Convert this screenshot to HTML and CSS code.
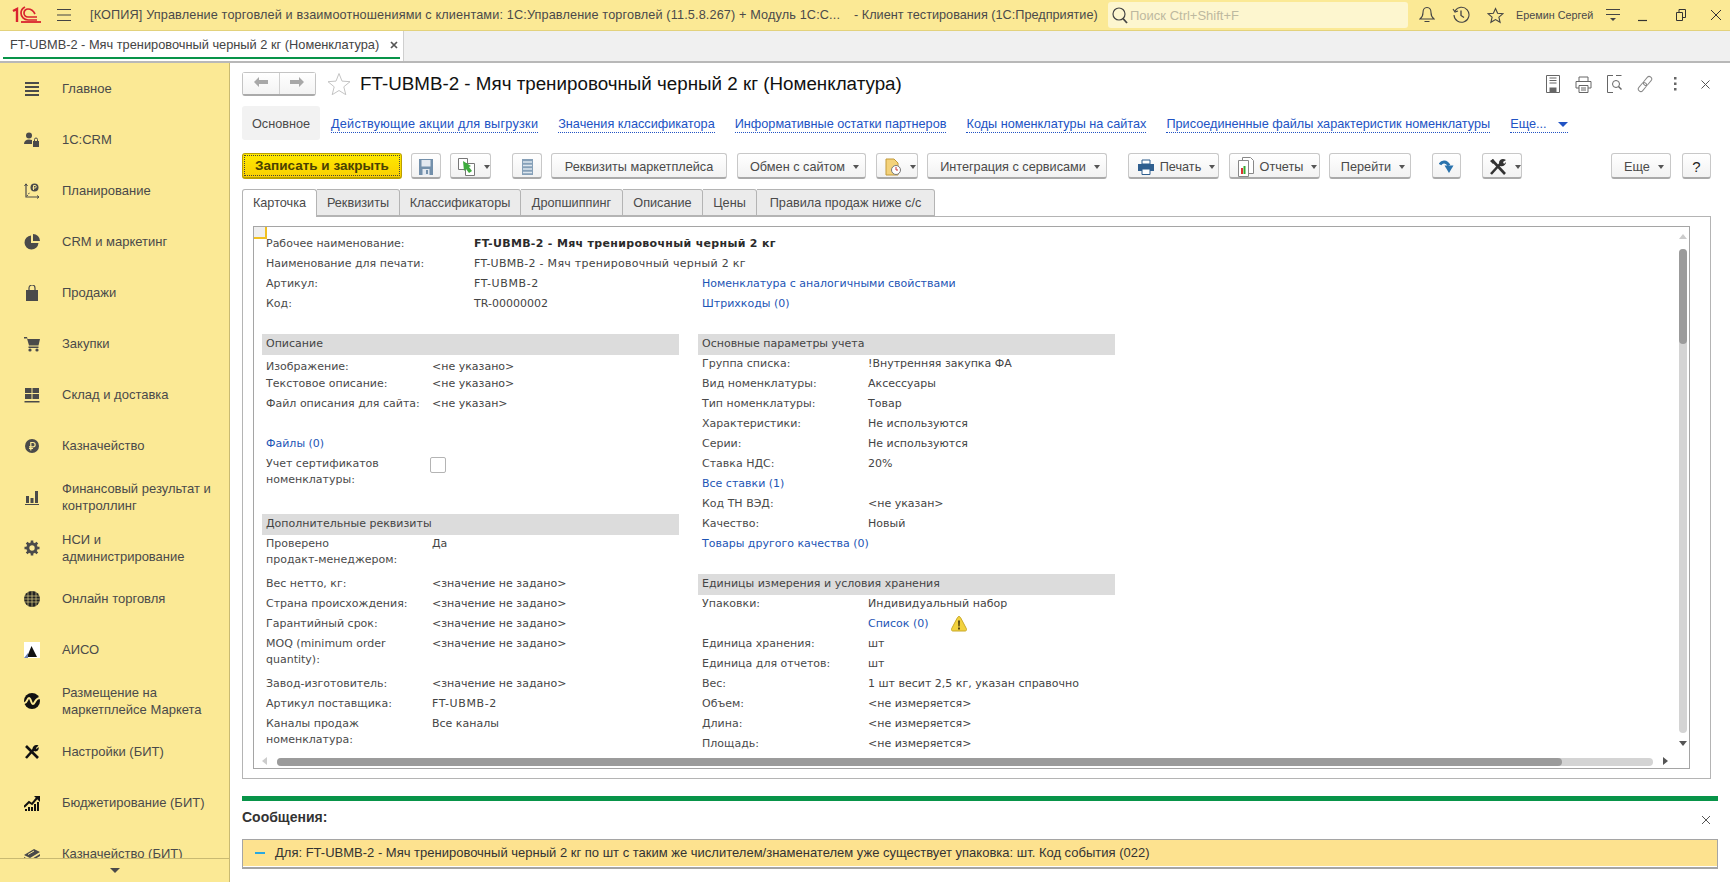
FILE: index.html
```html
<!DOCTYPE html>
<html lang="ru">
<head>
  <meta charset="UTF-8" />
  <title>FT-UBMB-2 - Мяч тренировочный черный 2 кг (Номенклатура)</title>
  <link rel="stylesheet" href="styles.css">
</head>
<body>
<div class="app">

  <!-- window title -->
  <header class="titlebar">
    <svg class="logo" width="30" height="18" viewBox="0 0 30 18"><path d="M1 5l4-2v13M5 3v13" fill="none" stroke="#d9232e" stroke-width="2.4"/><path d="M25 11h-9a4 4 0 0 1 0-8c3 0 5 1 7 5M25 14h-9a7 7 0 0 1-7-7c0-3 2-5 4-6" fill="none" stroke="#d9232e" stroke-width="1.7"/><path d="M9 16h20" stroke="#d9232e" stroke-width="1.8"/></svg>
    <svg class="burger" width="16" height="14" viewBox="0 0 16 14"><path d="M1 1.500h14M1 7h14M1 12.500h14" stroke="#444" stroke-width="1.200"/></svg>
    <span class="app-title">[КОПИЯ] Управление торговлей и взаимоотношениями с клиентами: 1С:Управление торговлей (11.5.8.267) + Модуль 1С:С...</span>
    <span class="app-sub">- Клиент тестирования (1С:Предприятие)</span>
    <div class="search">
      <svg width="18" height="18" viewBox="0 0 18 18"><circle cx="8" cy="8" r="6" fill="none" stroke="#444" stroke-width="1.200"/><path d="M12 12.500l4 4.500" stroke="#444" stroke-width="1.800"/></svg>
      <span>Поиск Ctrl+Shift+F</span>
    </div>
    <svg class="tb-icon bell" width="16" height="18" viewBox="0 0 16 18"><path d="M8 1.500c-3 0-4 2.500-4 5 0 3-1 5-3 6.500h14c-2-1.500-3-3.500-3-6.500 0-2.500-1-5-4-5zM5.500 15.500h5" fill="none" stroke="#444" stroke-width="1.100"/></svg>
    <svg class="tb-icon hist" width="18" height="18" viewBox="0 0 18 18"><path d="M3 5a7.500 7.500 0 1 1-1 4M1 3l2 3 3-1" fill="none" stroke="#444" stroke-width="1.100"/><path d="M9 4.500v5l3 2" fill="none" stroke="#444" stroke-width="1.300"/></svg>
    <svg class="tb-icon fav" width="17" height="17" viewBox="0 0 17 17"><path d="M8.500 1.500l2.100 4.800 5.200.5-3.900 3.400 1.200 5.100-4.600-2.700-4.600 2.700 1.200-5.100L1.200 6.800l5.200-.5z" fill="none" stroke="#444" stroke-width="1.100"/></svg>
    <span class="user">Еремин Сергей</span>
    <svg class="tb-icon umenu" width="16" height="14" viewBox="0 0 16 14"><path d="M1 1.500h14M1 6.500h14" stroke="#444" stroke-width="1.200"/><path d="M5 10h6l-3 3z" fill="#444"/></svg>
    <svg class="tb-icon wmin" width="10" height="14" viewBox="0 0 10 14"><path d="M0 12.500h9" stroke="#333" stroke-width="1.200"/></svg>
    <svg class="tb-icon wres" width="10" height="12" viewBox="0 0 10 12"><path d="M.5 3.500h6v8h-6zM3 3.500V.5h6.500v8H6.500" fill="none" stroke="#333"/></svg>
    <svg class="tb-icon wclose" width="12" height="12" viewBox="0 0 12 12"><path d="M1 1l10 10M11 1L1 11" stroke="#333"/></svg>
  </header>

  <!-- open windows -->
  <div class="opentabs">
    <div class="opentab">
      <span>FT-UBMB-2 - Мяч тренировочный черный 2 кг (Номенклатура)</span>
      <svg width="8" height="8" viewBox="0 0 8 8"><path d="M1 1l6 6M7 1L1 7" stroke="#555" stroke-width="1.700"/></svg>
    </div>
  </div>

  <div class="workspace">

    <aside class="sidebar">
      <nav class="sections">
        <a class="section">
          <svg width="16" height="16" viewBox="0 0 16 16"><path d="M1 2h14M1 6h14M1 10h14M1 14h14" stroke="#4a4a4a" stroke-width="2"/></svg>
          <span>Главное</span>
        </a>
        <a class="section">
          <svg width="16" height="16" viewBox="0 0 16 16"><circle cx="5" cy="3.500" r="3" fill="#4a4a4a"/><path d="M0 12c0-3 2-4.500 5-4.500 1 0 2 .2 3 .6V12z" fill="#4a4a4a"/><path d="M9 9h6v6H9z" fill="#4a4a4a"/><path d="M10.500 9V7.500a1.500 1.500 0 0 1 3 0V9" fill="none" stroke="#4a4a4a"/></svg>
          <span>1С:CRM</span>
        </a>
        <a class="section">
          <svg width="16" height="16" viewBox="0 0 16 16"><path d="M2 1v13h13" fill="none" stroke="#4a4a4a" stroke-width="1.200"/><path d="M.5 3L2 .8 3.500 3M13 12.500l2 1.500-2 1.500" fill="none" stroke="#4a4a4a"/><circle cx="10.500" cy="4.500" r="4" fill="#4a4a4a"/><path d="M9.500 7V2.500h1.500a1 1 0 0 1 0 2.500H8.500" fill="none" stroke="#fbe995"/><path d="M3 13l3-4" stroke="#4a4a4a" stroke-dasharray="1.500 1"/></svg>
          <span>Планирование</span>
        </a>
        <a class="section">
          <svg width="16" height="16" viewBox="0 0 16 16"><path d="M7 1.500a7 7 0 1 0 7.500 7.500H7z" fill="#4a4a4a"/><path d="M9 0a7 7 0 0 1 7 7H9z" fill="#4a4a4a"/></svg>
          <span>CRM и маркетинг</span>
        </a>
        <a class="section">
          <svg width="16" height="16" viewBox="0 0 16 16"><path d="M2 5h12v11H2z" fill="#4a4a4a"/><path d="M5 7V3a3 3 0 0 1 6 0v4" fill="none" stroke="#4a4a4a" stroke-width="1.200"/></svg>
          <span>Продажи</span>
        </a>
        <a class="section">
          <svg width="16" height="16" viewBox="0 0 16 16"><path d="M0 1h3l.5 2H16l-1.500 6.500H5L3 2.500H0z" fill="#4a4a4a"/><path d="M4.500 10.500h10v1.500h-10z" fill="#4a4a4a"/><circle cx="6" cy="14" r="1.600" fill="#4a4a4a"/><circle cx="13" cy="14" r="1.600" fill="#4a4a4a"/></svg>
          <span>Закупки</span>
        </a>
        <a class="section">
          <svg width="16" height="16" viewBox="0 0 16 16"><path d="M1 1h6.500v5H1zM8.500 1H15v5H8.500zM1 7h6.500v5H1zM8.500 7H15v5H8.500zM.5 14h15v1.500H.5z" fill="#4a4a4a"/></svg>
          <span>Склад и доставка</span>
        </a>
        <a class="section">
          <svg width="16" height="16" viewBox="0 0 16 16"><circle cx="8" cy="8" r="7" fill="#4a4a4a"/><path d="M6.800 12.500V4.500h2.200a2 2 0 0 1 0 4.300H5M5 10.500h4" fill="none" stroke="#fbe995" stroke-width="1.200"/></svg>
          <span>Казначейство</span>
        </a>
        <a class="section">
          <svg width="16" height="16" viewBox="0 0 16 16"><path d="M2 7h3v7H2zM6.500 9h3v5h-3zM11 2h3v12h-3zM1 15h14v1H1z" fill="#4a4a4a"/></svg>
          <span>Финансовый результат и контроллинг</span>
        </a>
        <a class="section">
          <svg width="16" height="16" viewBox="0 0 16 16"><circle cx="8" cy="8" r="4.200" fill="none" stroke="#4a4a4a" stroke-width="3"/><path d="M8 .5v15M.5 8h15M2.700 2.700l10.600 10.600M13.300 2.700L2.700 13.300" stroke="#4a4a4a" stroke-width="2.600" stroke-dasharray="2.600 10"/></svg>
          <span>НСИ и<br>администрирование</span>
        </a>
        <a class="section">
          <svg width="16" height="16" viewBox="0 0 16 16"><circle cx="8" cy="8" r="8" fill="#222"/><path d="M0 5h16M0 8h16M0 11h16M4 1v14M8 0v16M12 1v14" stroke="#fbe995" stroke-width=".6"/></svg>
          <span>Онлайн торговля</span>
        </a>
        <a class="section">
          <svg width="16" height="16" viewBox="0 0 16 16"><path d="M0 0h16v16H0z" fill="#fff"/><path d="M7.500 4L13 15H3z" fill="#111"/><path d="M0 16l4-5v5z" fill="#6b7fb0"/></svg>
          <span>АИСО</span>
        </a>
        <a class="section">
          <svg width="16" height="16" viewBox="0 0 16 16"><circle cx="8" cy="8" r="8" fill="#111"/><path d="M0 10c3 1 3-5 5-5s2 6 4 6 2-6 7-6" fill="none" stroke="#fbe995" stroke-width="2"/></svg>
          <span>Размещение на маркетплейсе Маркета</span>
        </a>
        <a class="section">
          <svg width="16" height="16" viewBox="0 0 16 16"><path d="M2 14L11 4" stroke="#111" stroke-width="2.600"/><path d="M2 2l12 12" stroke="#111" stroke-width="2.600"/><path d="M8.500 5c0-3 3-5 6-3.500L12 4l.5 1 2-2c1 3-2 5.500-4.500 4z" fill="#111"/></svg>
          <span>Настройки (БИТ)</span>
        </a>
        <a class="section">
          <svg width="16" height="16" viewBox="0 0 16 16"><path d="M0 12l5-5 3 2 5-6" fill="none" stroke="#111" stroke-width="2"/><path d="M10 1h6v6z" fill="#111"/><path d="M1 14h2v2H1zM4 12h2v4H4zM7 12h2v4H7zM10 9h2v7h-2zM13 7h2v9h-2z" fill="#111"/></svg>
          <span>Бюджетирование (БИТ)</span>
        </a>
        <a class="section">
          <svg width="16" height="16" viewBox="0 0 16 16"><path d="M0 9l10-6 6 3-10 6zM0 11l6 3 10-6v2l-10 6-6-3z" fill="#4a4a4a"/><path d="M4 8.500l6-3.500" stroke="#fbe995"/></svg>
          <span>Казначейство (БИТ)</span>
        </a>
      </nav>
      <div class="sections-more"><i></i></div>
    </aside>

    <main class="content">

      <div class="form-head">
        <div class="nav-btns">
          <button type="button"><svg width="16" height="12" viewBox="0 0 16 12"><path d="M1 6l5-5v3h9v4H6v3z" fill="#a8a8a8"/></svg></button>
          <button type="button"><svg width="16" height="12" viewBox="0 0 16 12"><path d="M15 6l-5-5v3H1v4h9v3z" fill="#a8a8a8"/></svg></button>
        </div>
        <svg class="form-star" width="24" height="24" viewBox="0 0 24 24"><path d="M12 1.500l3 7.600 8 .6-6.200 5.100 2 7.900L12 18.500l-6.800 4.200 2-7.900L1 9.700l8-.6z" fill="#fff" stroke="#c4c4c4"/></svg>
        <h1>FT-UBMB-2 - Мяч тренировочный черный 2 кг (Номенклатура)</h1>
        <div class="head-tools">
          <svg width="14" height="18" viewBox="0 0 14 18"><path d="M.5.500h13v17H.5zM3.500 3h7M3.500 5.500h7M3.500 8h7" fill="none" stroke="#666"/><path d="M3.500 12.500h7v5h-7z" fill="#666"/></svg>
          <svg width="17" height="17" viewBox="0 0 17 17"><path d="M4 5V1h9v4M4 12H1V5.500h15V12h-3M4 9.500h9v7H4zM6 12h5M6 14h5" fill="none" stroke="#666"/></svg>
          <svg width="15" height="18" viewBox="0 0 15 18"><path d="M6 .5H.5v17H6M9 .5h5.500" fill="none" stroke="#666"/><circle cx="9" cy="9" r="3.500" fill="none" stroke="#666"/><path d="M11.500 11.500l3 3" stroke="#666" stroke-width="1.400"/></svg>
          <svg width="16" height="18" viewBox="0 0 16 18"><g transform="rotate(40 8 9)" fill="none" stroke="#888"><rect x="5.500" y="0" width="5" height="10" rx="2.500"/><rect x="5.500" y="8" width="5" height="10" rx="2.500"/></g></svg>
          <svg width="4" height="14" viewBox="0 0 4 14"><path d="M1 0h2.500v2.500H1zM1 5.500h2.500V8H1zM1 11h2.500v2.500H1z" fill="#666"/></svg>
          <svg width="9" height="9" viewBox="0 0 9 9"><path d="M.5.500l8 8M8.500.500l-8 8" stroke="#555"/></svg>
        </div>
      </div>

      <div class="form-links">
        <span class="link-current">Основное</span>
        <a class="dlink dlink-wide">Действующие акции для выгрузки</a>
        <a class="dlink">Значения классификатора</a>
        <a class="dlink">Информативные остатки партнеров</a>
        <a class="dlink">Коды номенклатуры на сайтах</a>
        <a class="dlink">Присоединенные файлы характеристик номенклатуры</a>
        <a class="dlink">Еще...<i class="more-arrow"></i></a>
      </div>

      <div class="cmdbar">
        <button type="button" class="btn btn-main w160"><span>Записать и закрыть</span></button>
        <button type="button" class="btn w30"><svg width="14" height="16" viewBox="0 0 14 16"><path d="M0 0h14v16H0z" fill="#7390ab"/><path d="M2.500 1h9v6.500h-9z" fill="#e3e9f0"/><path d="M3.500 10h7v6h-7z" fill="#e3e9f0"/><path d="M7 11h2v4H7z" fill="#7390ab"/></svg></button>
        <button type="button" class="btn w41"><svg width="18" height="18" viewBox="0 0 18 18"><path d="M.5.500h9v11h-9z" fill="#fff" stroke="#777"/><path d="M7.500 5.500h9v12h-9z" fill="#fff" stroke="#777"/><path d="M5 3l8 5-2 1 3 4-3 2-3-4-2 2z" fill="#3dab3d"/></svg><i class="caret"></i></button>
        <button type="button" class="btn w30 sep"><svg width="11" height="16" viewBox="0 0 11 16"><path d="M0 0h11v16H0z" fill="#86a0b8"/><path d="M1 3h9M1 6.500h9M1 10h9M1 13.500h9" stroke="#dde6ee" stroke-width="1.300"/></svg></button>
        <button type="button" class="btn w176">Реквизиты маркетплейса</button>
        <button type="button" class="btn w129 sp1">Обмен с сайтом<i class="caret"></i></button>
        <button type="button" class="btn w42 sp1"><svg width="18" height="18" viewBox="0 0 18 18"><path d="M2 1h8l4 4v12H2z" fill="#f4d27a" stroke="#c29a3a"/><circle cx="12" cy="12" r="4.500" fill="#fff" stroke="#777"/><path d="M12 9v3h2" stroke="#c33" fill="none"/></svg><i class="caret"></i></button>
        <button type="button" class="btn w180">Интеграция с сервисами<i class="caret"></i></button>
        <button type="button" class="btn w91 sep"><svg width="16" height="16" viewBox="0 0 16 16"><path d="M4 1h8v4H4z" fill="#fff" stroke="#2f5f8f"/><path d="M0 5h16v7H0z" fill="#2f5f8f"/><path d="M4 10h8v5.500H4z" fill="#fff" stroke="#2f5f8f"/></svg>Печать<i class="caret"></i></button>
        <button type="button" class="btn w91 sp1"><svg width="16" height="20" viewBox="0 0 16 20"><path d="M4.500.5h8l3 3v13h-11z" fill="#fff" stroke="#888"/><path d="M.5 3.500h10v16H.5z" fill="#fff" stroke="#888"/><path d="M3 11h2v6H3z" fill="#d33"/><path d="M5.500 9h2v8h-2z" fill="#3a3"/></svg>Отчеты<i class="caret"></i></button>
        <button type="button" class="btn w82">Перейти<i class="caret"></i></button>
        <button type="button" class="btn w29 sep"><svg width="15" height="15" viewBox="0 0 15 15"><path d="M1 5.500C3 2 7.500 2 10 6.500" fill="none" stroke="#2a73ad" stroke-width="3"/><path d="M5.500 6.500H14.500L10 14z" fill="#2a73ad"/></svg></button>
        <button type="button" class="btn w40 sep"><svg width="18" height="18" viewBox="0 0 18 18"><path d="M2 16L12 5" stroke="#333" stroke-width="2.600"/><path d="M3 2l13 14" stroke="#333" stroke-width="2.600"/><path d="M10 4c1-3 4-4 7-2l-3 2 1 2 2-2c0 3-3 5-6 4z" fill="#333"/><path d="M1 3l3-2 2 3-2 2z" fill="#333"/></svg><i class="caret"></i></button>
        <button type="button" class="btn w60 push">Еще<i class="caret"></i></button>
        <button type="button" class="btn btn-help w29 sp2">?</button>
      </div>

      <div class="page-tabs">
        <span class="page-tab active t75">Карточка</span>
        <span class="page-tab t83">Реквизиты</span>
        <span class="page-tab t121">Классификаторы</span>
        <span class="page-tab t102">Дропшиппинг</span>
        <span class="page-tab t80">Описание</span>
        <span class="page-tab t54">Цены</span>
        <span class="page-tab t178">Правила продаж ниже с/с</span>
      </div>

      <section class="page-panel">
        <div class="scrollbox">
          <i class="corner"></i>

          <div class="card">
            <div class="top-grid">
              <span class="lbl">Рабочее наименование:</span><b class="val-wide">FT-UBMB-2 - Мяч тренировочный черный 2 кг</b>
              <span class="lbl">Наименование для печати:</span><span class="val-wide">FT-UBMB-2 - Мяч тренировочный черный 2 кг</span>
              <span class="lbl">Артикул:</span><span class="sku">FT-UBMB-2</span><a class="flink">Номенклатура с аналогичными свойствами</a>
              <span class="lbl">Код:</span><span>TR-00000002</span><a class="flink">Штрихкоды (0)</a>
            </div>

            <div class="columns">
              <div class="col">
                <h2 class="group">Описание</h2>
                <div class="row first-tight"><span class="lbl">Изображение:</span><span>&lt;не указано&gt;</span></div>
                <div class="row"><span class="lbl">Текстовое описание:</span><span>&lt;не указано&gt;</span></div>
                <div class="row"><span class="lbl">Файл описания для сайта:</span><span>&lt;не указан&gt;</span></div>
                <div class="row"></div>
                <div class="row"><a class="flink">Файлы (0)</a></div>
                <div class="row two"><span class="lbl">Учет сертификатов<br>номенклатуры:</span><i class="check"></i></div>

                <h2 class="group next">Дополнительные реквизиты</h2>
                <div class="row two"><span class="lbl">Проверено<br>продакт-менеджером:</span><span>Да</span></div>
                <div class="row"><span class="lbl">Вес нетто, кг:</span><span>&lt;значение не задано&gt;</span></div>
                <div class="row"><span class="lbl">Страна происхождения:</span><span>&lt;значение не задано&gt;</span></div>
                <div class="row"><span class="lbl">Гарантийный срок:</span><span>&lt;значение не задано&gt;</span></div>
                <div class="row two"><span class="lbl">MOQ (minimum order<br>quantity):</span><span>&lt;значение не задано&gt;</span></div>
                <div class="row"><span class="lbl">Завод-изготовитель:</span><span>&lt;значение не задано&gt;</span></div>
                <div class="row"><span class="lbl">Артикул поставщика:</span><span class="sku">FT-UBMB-2</span></div>
                <div class="row two"><span class="lbl">Каналы продаж<br>номенклатура:</span><span>Все каналы</span></div>
              </div>

              <div class="col col-right">
                <h2 class="group">Основные параметры учета</h2>
                <div class="row"><span class="lbl">Группа списка:</span><span>!Внутренняя закупка ФА</span></div>
                <div class="row"><span class="lbl">Вид номенклатуры:</span><span>Аксессуары</span></div>
                <div class="row"><span class="lbl">Тип номенклатуры:</span><span>Товар</span></div>
                <div class="row"><span class="lbl">Характеристики:</span><span>Не используются</span></div>
                <div class="row"><span class="lbl">Серии:</span><span>Не используются</span></div>
                <div class="row"><span class="lbl">Ставка НДС:</span><span>20%</span></div>
                <div class="row"><a class="flink">Все ставки (1)</a></div>
                <div class="row"><span class="lbl">Код ТН ВЭД:</span><span>&lt;не указан&gt;</span></div>
                <div class="row"><span class="lbl">Качество:</span><span>Новый</span></div>
                <div class="row"><a class="flink">Товары другого качества (0)</a></div>

                <h2 class="group next">Единицы измерения и условия хранения</h2>
                <div class="row"><span class="lbl">Упаковки:</span><span>Индивидуальный набор</span></div>
                <div class="row"><span class="lbl"></span><a class="flink">Список (0)</a>
                  <svg class="warn" width="16" height="16" viewBox="0 0 16 16"><path d="M8 .5c.8 0 1.200.5 1.600 1.200l5.800 11c.6 1.200 0 2.300-1.300 2.300H1.900C.6 15 0 13.900.6 12.700l5.800-11C6.800 1 7.200.5 8 .5z" fill="#f2d23f" stroke="#c9a92a"/><path d="M7 4.500h2l-.3 6H7.300zM7 11.500h2v2H7z" fill="#5a4a10"/></svg>
                </div>
                <div class="row"><span class="lbl">Единица хранения:</span><span>шт</span></div>
                <div class="row"><span class="lbl">Единица для отчетов:</span><span>шт</span></div>
                <div class="row"><span class="lbl">Вес:</span><span>1 шт весит 2,5 кг, указан справочно</span></div>
                <div class="row"><span class="lbl">Объем:</span><span>&lt;не измеряется&gt;</span></div>
                <div class="row"><span class="lbl">Длина:</span><span>&lt;не измеряется&gt;</span></div>
                <div class="row"><span class="lbl">Площадь:</span><span>&lt;не измеряется&gt;</span></div>
              </div>
            </div>
          </div>

          <i class="arr arr-up"></i>
          <div class="vscroll"><div class="vthumb"></div></div>
          <i class="arr arr-down"></i>
          <i class="arr arr-left"></i>
          <div class="hscroll"><div class="hthumb"></div></div>
          <i class="arr arr-right"></i>
        </div>
      </section>

      <div class="messages">
        <div class="msg-head">
          <strong>Сообщения:</strong>
          <svg width="10" height="10" viewBox="0 0 10 10"><path d="M1 1l8 8M9 1l-8 8" stroke="#555"/></svg>
        </div>
        <div class="msg-line">
          <i class="msg-dash"></i>
          <span>Для: FT-UBMB-2 - Мяч тренировочный черный 2 кг по шт с таким же числителем/знаменателем уже существует упаковка: шт. Код события (022)</span>
        </div>
      </div>

    </main>
  </div>
</div>
</body>
</html>
```

FILE: styles.css
```css
* {
  box-sizing: border-box;
}
html, body {
  margin: 0;
  height: 100%;
}
body {
  font-family: "Liberation Sans", Arial, sans-serif;
  font-size: 12.700px;
  color: #4a4a4a;
  background: #fff;
  overflow: hidden;
}
.app {
  width: 1730px;
  height: 882px;
  display: flex;
  flex-direction: column;
}

/* title bar */
.titlebar {
  height: 31px;
  flex: none;
  display: flex;
  align-items: center;
  padding-right: 8px;
  background: #fbe995;
  border-bottom: 1px solid #e3d27c;
  color: #4a4a4a;
  white-space: nowrap;
}
.logo {
  margin-left: 12px;
}
.burger {
  margin-left: 14px;
}
.app-title {
  margin-left: 18px;
  letter-spacing: .13px;
}
.app-sub {
  margin-left: 14px;
}
.search {
  margin-left: auto;
  width: 300px;
  height: 26px;
  display: flex;
  align-items: center;
  gap: 1px;
  padding-left: 3px;
  background: #fdf6cf;
  border-radius: 3px;
  color: #bdb9a0;
  font-size: 13px;
}
.tb-icon {
  flex: none;
}
.bell { margin-left: 11px; }
.hist { margin-left: 17px; }
.fav { margin-left: 17px; }
.user {
  margin-left: 12px;
  width: 80px;
  font-size: 10.800px;
}
.umenu { margin-left: 9px; }
.wmin { margin-left: 17px; }
.wres { margin-left: 28px; }
.wclose { margin-left: 24px; }

/* open windows bar */
.opentabs {
  height: 32px;
  flex: none;
  background: #f0f0f0;
  border-bottom: 2px solid #b8b8b8;
}
.opentab {
  width: 404px;
  height: 30px;
  display: flex;
  align-items: center;
  justify-content: space-between;
  background: #fff;
  padding: 0 5px 3px 10px;
  border-right: 1px solid #cfcfcf;
  color: #444;
  position: relative;
  font-size: 12.800px;
  white-space: nowrap;
}
.opentab::after {
  content: "";
  position: absolute;
  left: 3px;
  right: 3px;
  bottom: 2px;
  height: 2px;
  background: #089449;
}

.workspace {
  flex: 1;
  display: flex;
  min-height: 0;
}

/* section panel */
.sidebar {
  width: 230px;
  flex: none;
  display: flex;
  flex-direction: column;
  background: #fbe995;
  border-right: 1px solid #c9ba72;
}
.sections {
  height: 795px;
  overflow: hidden;
}
.section {
  height: 51px;
  display: flex;
  align-items: center;
  padding-left: 24px;
  gap: 22px;
  font-size: 13px;
  line-height: 16.500px;
  color: #4a4a4a;
}
.section svg {
  flex: none;
}
.section span {
  width: 156px;
  padding-top: 2px;
}
.sections-more {
  flex: 1;
  display: flex;
  align-items: center;
  justify-content: center;
  border-top: 1px solid #c9ba72;
}
.sections-more i {
  border: 5px solid transparent;
  border-top: 5px solid #4a4a4a;
  border-bottom: 0;
}

/* form */
.content {
  flex: 1;
  min-width: 0;
  padding: 9px 12px 0;
}
.form-head {
  height: 24px;
  display: flex;
  align-items: center;
}
.nav-btns {
  width: 74px;
  height: 24px;
  display: flex;
  border: 1px solid #c4c4c4;
  border-bottom: 2px solid #aaa;
  border-radius: 3px;
}
.nav-btns button {
  flex: 1;
  border: 0;
  background: linear-gradient(#fff, #f3f3f3);
  padding: 0;
}
.nav-btns button + button {
  border-left: 1px solid #d0d0d0;
}
.form-star {
  margin-left: 11px;
}
h1 {
  margin: 0 0 0 9px;
  font-size: 18.800px;
  font-weight: normal;
  color: #111;
  white-space: nowrap;
}
.head-tools {
  margin-left: auto;
  margin-right: -3px;
  display: grid;
  grid-template-columns: repeat(6, 30.500px);
  justify-items: center;
  align-items: center;
}

.form-links {
  height: 34px;
  margin-top: 10px;
  display: flex;
  align-items: center;
  gap: 20px;
}
.link-current {
  width: 78px;
  height: 34px;
  line-height: 36px;
  text-align: center;
  background: #f2f2f2;
  border-radius: 3px;
  color: #4a4a4a;
  margin-right: -9px;
}
.dlink {
  margin-top: 4px;
  color: #2153c4;
  border-bottom: 1px dotted #2153c4;
  line-height: 15px;
  white-space: nowrap;
}
.dlink-wide {
  letter-spacing: .23px;
}
.more-arrow {
  display: inline-block;
  margin-left: 11px;
  border: 5px solid transparent;
  border-top: 5px solid #2153c4;
  border-bottom: 0;
  vertical-align: middle;
}

/* command bar */
.cmdbar {
  height: 26px;
  margin: 13px 7px 0 0;
  display: flex;
  gap: 9px;
}
.btn {
  height: 26px;
  flex: none;
  display: flex;
  align-items: center;
  justify-content: center;
  gap: 6px;
  padding: 2px 0 0;
  border: 1px solid #c8c8c8;
  border-bottom: 2px solid #aaa;
  border-radius: 3px;
  background: linear-gradient(#fff, #f2f2f2);
  font: inherit;
  color: #4a4a4a;
}
.btn-main {
  background: linear-gradient(#ffea00, #f9cf00);
  border-color: #bba000;
  font-weight: bold;
  font-size: 13.500px;
  color: #4a4200;
  padding: 2px;
}
.btn-main span {
  width: 100%;
  height: 100%;
  line-height: 20px;
  outline: 1px dotted #444;
  display: block;
}
.btn-help {
  font-size: 15px;
  color: #222;
}
.caret {
  width: 0;
  margin: 0 -6px 0 2px;
  border: 3px solid transparent;
  border-top: 4px solid #555;
  border-bottom: 0;
}
.sep { margin-left: 12px; }
.sp1 { margin-left: 1px; }
.sp2 { margin-left: 2px; }
.push { margin-left: auto; }
.w29 { width: 29px; }
.w30 { width: 30px; }
.w40 { width: 40px; }
.w41 { width: 41px; }
.w42 { width: 42px; }
.w60 { width: 60px; }
.w82 { width: 82px; }
.w91 { width: 91px; }
.w129 { width: 129px; }
.w160 { width: 160px; }
.w176 { width: 176px; }
.w180 { width: 180px; }

/* page tabs */
.page-tabs {
  height: 28px;
  margin-top: 10px;
  display: flex;
  position: relative;
  z-index: 1;
}
.page-tab {
  height: 27px;
  line-height: 26px;
  text-align: center;
  background: #ebebeb;
  border: 1px solid #b4b4b4;
  border-left: 0;
  border-radius: 0 3px 0 0;
  white-space: nowrap;
}
.page-tab.active {
  height: 28px;
  background: #fff;
  border-left: 1px solid #b4b4b4;
  border-bottom: 0;
  border-radius: 3px 3px 0 0;
}
.t54 { width: 54px; }
.t75 { width: 75px; }
.t80 { width: 80px; }
.t83 { width: 83px; }
.t102 { width: 102px; }
.t121 { width: 121px; }
.t178 { width: 178px; }

.page-panel {
  margin-top: -1px;
  margin-right: 7px;
  height: 563px;
  padding: 9px 20px 9px 10px;
  border: 1px solid #b4b4b4;
}
.scrollbox {
  height: 100%;
  border: 1px solid #a5a5a5;
  position: relative;
  overflow: hidden;
}
.corner {
  position: absolute;
  left: 0;
  top: 0;
  width: 13px;
  height: 12px;
  background: #efefef;
  border-right: 2px solid #f0c020;
  border-bottom: 2px solid #f0c020;
}

/* card fields */
.card {
  padding: 8px 0 0 8px;
  font-family: "DejaVu Sans", Verdana, sans-serif;
  font-size: 11px;
  line-height: 18px;
  color: #444;
}
.lbl {
  color: #4a4a4a;
}
.flink {
  color: #1d55b5;
}
.sku {
  letter-spacing: .6px;
}
.top-grid {
  display: grid;
  grid-template-columns: 208px 228px 1fr;
  grid-auto-rows: 20px;
  padding-left: 4px;
}
.val-wide {
  grid-column: 2 / 4;
  letter-spacing: .27px;
}
.top-grid b {
  color: #2b2b2b;
  letter-spacing: .32px;
}
.columns {
  display: flex;
  gap: 19px;
  margin-top: 19px;
}
.col {
  width: 417px;
}
.group {
  height: 21px;
  margin: 0;
  padding-left: 4px;
  background: #dcdcdc;
  font-size: 11px;
  font-weight: normal;
  line-height: 19px;
  color: #444;
}
.group.next {
  margin-top: 19px;
}
.row {
  height: 20px;
  display: grid;
  grid-template-columns: 166px 1fr;
  padding-left: 4px;
  align-items: start;
  white-space: nowrap;
}
.col-right .row {
  display: flex;
}
.col-right .row .lbl {
  width: 166px;
  flex: none;
}
.row.first-tight {
  padding-top: 3px;
}
.row.two {
  height: 40px;
  line-height: 16px;
  padding-top: 1px;
}
.check {
  width: 16px;
  height: 16px;
  margin: 1px 0 0 -2px;
  border: 1px solid #b4b4b4;
  border-radius: 2px;
  background: #fff;
}
.warn {
  margin: 1px 0 0 22px;
}

/* scrollbars */
.vscroll {
  position: absolute;
  right: 2px;
  top: 22px;
  width: 8px;
  height: 484px;
  background: #d4d4d4;
  border-radius: 4px;
}
.vthumb {
  height: 95px;
  background: #9b9b9b;
  border-radius: 4px;
}
.hscroll {
  position: absolute;
  left: 23px;
  bottom: 2px;
  width: 1376px;
  height: 8px;
  background: #d4d4d4;
  border-radius: 4px;
}
.hthumb {
  width: 1285px;
  height: 8px;
  background: #9b9b9b;
  border-radius: 4px;
}
.arr {
  position: absolute;
  width: 0;
  height: 0;
  border: 4px solid transparent;
}
.arr-up {
  right: 2px;
  top: 7px;
  border-top: 0;
  border-bottom: 5px solid #ccc;
}
.arr-down {
  right: 2px;
  top: 514px;
  border-bottom: 0;
  border-top: 5px solid #555;
}
.arr-left {
  left: 8px;
  bottom: 3px;
  border-left: 0;
  border-right: 5px solid #ccc;
}
.arr-right {
  left: 1409px;
  bottom: 3px;
  border-right: 0;
  border-left: 5px solid #555;
}

/* messages */
.messages {
  margin-top: 17px;
  border-top: 5px solid #089449;
}
.msg-head {
  height: 38px;
  display: flex;
  align-items: center;
  justify-content: space-between;
  padding: 0 7px 6px 0;
  color: #333;
  font-size: 14px;
}
.msg-head svg {
  margin-top: 6px;
}
.msg-line {
  height: 30px;
  display: flex;
  align-items: center;
  gap: 10px;
  padding: 0 0 2px 12px;
  background: #fde28f;
  border: 1px solid #a5a5a5;
  border-bottom-width: 2px;
  box-shadow: inset 0 -1px 0 #fff;
  color: #333;
  font-size: 13px;
}
.msg-dash {
  width: 10px;
  height: 2px;
  background: #29a8e0;
}
```
